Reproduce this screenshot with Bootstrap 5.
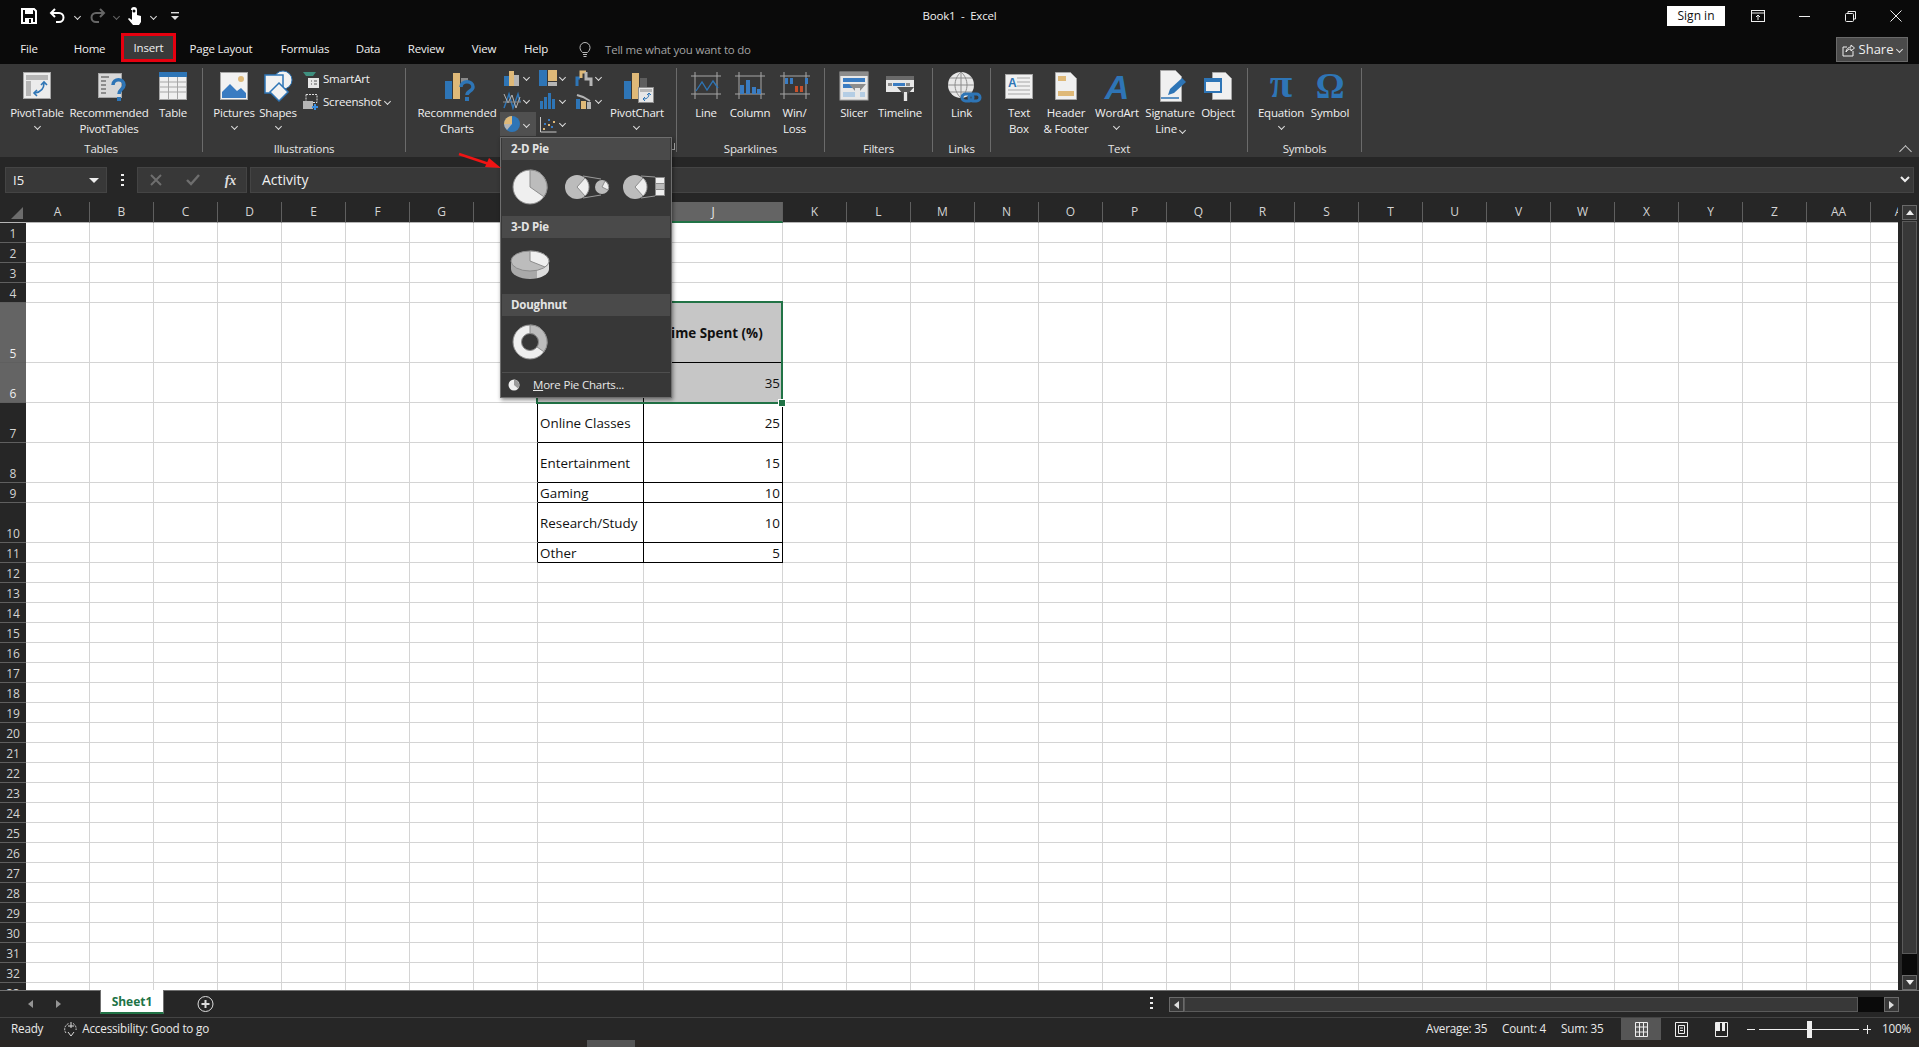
<!DOCTYPE html>
<html lang="en">
<head>
  <meta charset="UTF-8">
  <title>Book1 - Excel</title>
  <link href="https://cdn.jsdelivr.net/npm/bootstrap@5.3.3/dist/css/bootstrap.min.css" rel="stylesheet">
  <style>
    html, body { height: 100%; overflow: hidden; background: #262626; }
    body { font-family: "Open Sans", "Liberation Sans", sans-serif; font-size: 11.5px; letter-spacing: -.2px; color: #f0f0f0; }
    svg { display: block; flex: none; }
    .xl-app { width: 1919px; height: 1047px; position: relative; overflow: hidden; }

    .chv { display: inline-block; width: 5px; height: 5px; border-right: 1.4px solid #ddd; border-bottom: 1.4px solid #ddd; transform: rotate(45deg); flex: none; }
    .chv-dim { border-color: #666; }

    /* title + tabs */
    .title-bar { height: 32px; background: #0a0a0a; }
    .qat { width: 700px; padding-left: 20px; }
    .qat-gap { margin-left: 8px; }
    .qat-undo { margin-left: 11px; }
    .qat-custom { margin-left: 14px; }
    .doc-title { width: 519px; text-align: center; }
    .win-side { width: 700px; }
    .sign-in { width: 58px; height: 20px; margin-right: 10px; background: #fff; color: #111; line-height: 20px; text-align: center; border: 0; padding: 0; font-size: 12px; }
    .win-btn { width: 46px; display: flex; justify-content: center; }
    .tab-bar { height: 32px; background: #0a0a0a; position: relative; }
    .tab-item { color: #f0f0f0; text-align: center; line-height: 28px; height: 32px; padding-top: 3px; }
    .tab-file { width: 58px; }
    .tab-home { width: 63px; }
    .tab-insert { width: 55px; height: 29px; margin-top: 1px; line-height: 23px; background: #3a3a3a; border: 3px solid #e6000f; padding: 0; }
    .tab-layout { width: 90px; }
    .tab-formulas { width: 78px; }
    .tab-data { width: 48px; }
    .tab-review { width: 68px; }
    .tab-view { width: 48px; }
    .tab-help { width: 56px; }
    .tell-me { color: #a3a3a3; margin-left: 15px; gap: 14px; }
    .share-btn { position: absolute; left: 1836px; top: 5px; width: 72px; height: 25px; background: #4a4a4a; border: 1px solid #6a6a6a; color: #f0f0f0; font-size: 13px; letter-spacing: 0; padding: 0; gap: 4px; }

    /* ribbon */
    .ribbon { height: 93px; background: #383838; position: relative; }
    .rb-sep { width: 1px; height: 84px; margin-top: 4px; background: #6b6b6b; flex: none; }
    .rb-group { flex: none; padding-top: 2px; }
    .rb-row { display: grid; height: 75px; justify-items: center; align-items: start; }
    .rb-cap { line-height: 16px; text-align: center; color: #e6e6e6; }
    .rb-item { display: flex; flex-direction: column; align-items: center; white-space: nowrap; }
    .rb-icon { width: 40px; height: 39px; }
    .rb-label { line-height: 16px; text-align: center; }
    .rb-item .chv { margin-top: 3px; }
    .g-tables { width: 202px; }
    .g-tables .rb-row { grid-template-columns: 74px 70px 58px; }
    .g-illus { width: 202px; }
    .g-illus .rb-row { grid-template-columns: 62px 26px 114px; }
    .g-charts { width: 270px; position: relative; }
    .g-charts .rb-row { grid-template-columns: 86px 108px 58px; padding-left: 8px; }
    .g-spark { width: 147px; }
    .g-spark .rb-row { grid-template-columns: 58px 30px 59px; }
    .g-filter { width: 107px; }
    .g-filter .rb-row { grid-template-columns: 58px 34px 15px; }
    .g-links { width: 57px; }
    .g-links .rb-row { grid-template-columns: 57px; }
    .g-text { width: 256px; }
    .g-text .rb-row { grid-template-columns: 56px 38px 64px 42px 54px; }
    .g-sym { width: 113px; }
    .g-sym .rb-row { grid-template-columns: 66px 32px; }
    .small-list { justify-self: start; padding-left: 12px; padding-top: 1px; }
    .small-row { height: 23px; gap: 4px; white-space: nowrap; }
    .chart-grid { display: grid; grid-template-columns: repeat(3, 36px); grid-auto-rows: 23px; justify-self: start; }
    .chart-cell { display: flex; align-items: center; gap: 2px; padding-left: 2px; }
    .chart-on { background: #505050; height: 24px; }
    .launcher { position: absolute; left: 266px; top: 79px; width: 3px; height: 7px; border-right: 1px solid #aaa; border-bottom: 1px solid #aaa; }
    .rb-collapse { position: absolute; left: 1901px; top: 83px; width: 9px; height: 9px; border-left: 1.4px solid #ccc; border-top: 1.4px solid #ccc; transform: rotate(45deg); }

    /* formula bar */
    .fx-row { height: 45px; background: #262626; padding: 10px 5px 10px 5px; }
    .name-box { width: 102px; height: 26px; background: #383838; border: 1px solid #444; padding: 0 7px; line-height: 24px; font-size: 13px; letter-spacing: 0; }
    .tri-down { width: 0; height: 0; border-left: 5px solid transparent; border-right: 5px solid transparent; border-top: 5px solid #eee; }
    .fx-dots { width: 30px; }
    .fx-btns { width: 110px; height: 26px; background: #383838; border: 1px solid #444; padding: 0 10px 0 12px; }
    .fx-sym { font-family: "Liberation Serif", serif; font-style: italic; font-weight: 700; font-size: 14px; color: #ddd; }
    .fx-input { width: 1664px; height: 26px; margin-left: 3px; background: #383838; border: 1px solid #444; padding: 0 3px 0 11px; line-height: 24px; font-size: 14px; letter-spacing: 0; }

    /* sheet */
    .sheet-area { height: 788px; position: relative; }
    .grid-wrap { width: 1898px; height: 788px; overflow: hidden; background: #fff; position: relative; flex: none; }
    .xl-grid { table-layout: fixed; width: 1935px; border-collapse: separate; border-spacing: 0; font-size: 13.4px; letter-spacing: 0; color: #111; }
    .xl-grid td, .xl-grid th { padding: 0 2px; border-right: 1px solid #d4d4d4; border-bottom: 1px solid #d4d4d4; line-height: 16px; white-space: nowrap; overflow: hidden; vertical-align: middle; font-weight: 400; }
    .xl-grid th.col-head { height: 21px; background: #262626; color: #d4d4d4; text-align: center; font-size: 12px; border-right: 1px solid #5f5f5f; border-bottom: 1px solid #b5b5b5; }
    .xl-grid th.col-on { background: #646464; border-bottom: 2px solid #217346; color: #e8e8e8; }
    .xl-grid th.row-head { background: #262626; color: #d4d4d4; text-align: center; vertical-align: bottom; font-size: 12px; border-right: 0; border-bottom: 1px solid #5f5f5f; line-height: 17px; padding: 0; }
    .xl-grid th.row-on { background: #646464; color: #f0f0f0; }
    .xl-grid th.corner { background: #262626; border-bottom: 1px solid #b5b5b5; border-right: 0; position: relative; }
    .corner-tri { position: absolute; right: 3px; bottom: 3px; width: 0; height: 0; border-left: 12px solid transparent; border-bottom: 12px solid #6c6c6c; }
    .xl-grid td.sel-cell { background: #c6c6c6; }
    .xl-grid td.box-r { border-right-color: #000; }
    .xl-grid td.box-b { border-bottom-color: #000; }
    .xl-grid td.num { text-align: right; }
    .xl-grid td.head-cell { font-weight: 700; text-align: center; }
    .sel-box { position: absolute; left: 536px; top: 99px; width: 247px; height: 103px; border: 2px solid #217346; pointer-events: none; }
    .sel-handle { position: absolute; right: -5px; bottom: -5px; width: 8px; height: 8px; background: #217346; border: 1px solid #fff; }
    .v-scroll { width: 21px; padding: 3px 2px 0 4px; height: 788px; }
    .sb-btn { background: #383838; border: 1px solid #6a6a6a; flex: none; }
    .v-btn { height: 15px; }
    .v-thumb { height: 733px; margin-top: 1px; background: #383838; border: 1px solid #5a5a5a; }
    .v-track { flex: 1; background: #0a0a0a; }
    .tri-up { width: 0; height: 0; border-left: 4px solid transparent; border-right: 4px solid transparent; border-bottom: 5px solid #eee; }
    .tri-dn { width: 0; height: 0; border-left: 4px solid transparent; border-right: 4px solid transparent; border-top: 5px solid #eee; }
    .tri-l { width: 0; height: 0; border-top: 4px solid transparent; border-bottom: 4px solid transparent; border-right: 5px solid #ddd; }
    .tri-r { width: 0; height: 0; border-top: 4px solid transparent; border-bottom: 4px solid transparent; border-left: 5px solid #ddd; }
    .tri-mute { opacity: .6; }

    /* sheet tabs + status */
    .sheet-tabs { height: 28px; background: #262626; border-top: 1px solid #707070; border-bottom: 1px solid #444; position: relative; }
    .tab-nav { width: 100px; padding-left: 28px; gap: 23px; }
    .sheet-tab { width: 64px; height: 24px; margin-top: -1px; background: #fff; color: #217346; font-size: 12px; letter-spacing: 0; font-weight: 700; text-align: center; line-height: 23px; border-bottom: 2px solid #217346; border-left: 1px solid #707070; border-right: 1px solid #707070; }
    .add-sheet { margin-left: 33px; }
    .sheet-dots { position: absolute; left: 1150px; top: 5px; }
    .h-scroll { position: absolute; left: 1169px; top: 6px; width: 730px; height: 15px; }
    .h-btn { width: 15px; }
    .h-thumb { width: 674px; background: #383838; border: 1px solid #5a5a5a; }
    .h-track { flex: 1; background: #0a0a0a; }
    .status-bar { height: 22px; background: #262626; padding-left: 11px; font-size: 11.7px; color: #eaeaea; position: relative; }
    .acc-text { margin-left: 20px; gap: 3px; }
    .status-right { position: absolute; left: 1426px; top: 0; height: 22px; }
    .stat-avg { width: 76px; }
    .stat-count { width: 59px; }
    .stat-sum { width: 60px; }
    .view-btn { width: 40px; height: 22px; }
    .view-on { background: #565656; }
    .zoom-ctl { margin-left: 6px; gap: 4px; }
    .zoom-line { width: 100px; height: 1px; background: #eee; position: relative; }
    .zoom-thumb { position: absolute; left: 48px; top: -8px; width: 5px; height: 17px; background: #eee; }
    .zoom-sign { width: 8px; height: 1px; background: #eee; position: relative; }
    .zoom-plus::after { content: ""; position: absolute; left: 3.5px; top: -4px; width: 1px; height: 9px; background: #eee; }
    .zoom-pct { margin-left: 11px; }
    .desk-strip { height: 7px; background: #2b2724; position: relative; }
    .desk-thumb { position: absolute; left: 587px; top: 0; width: 48px; height: 7px; background: #555; }

    /* pie dropdown */
    .pie-menu { position: absolute; left: 500px; top: 137px; width: 172px; height: 261px; background: #373737; border: 1px solid #6e6e6e; box-shadow: 1px 2px 4px rgba(0,0,0,.45); color: #e8e8e8; z-index: 5; padding: 0 1px; }
    .pie-head { height: 22px; line-height: 22px; background: #4a4a4a; font-weight: 700; padding-left: 9px; color: #e4e4e4; }
    .pie-body { height: 56px; padding-left: 5px; padding-bottom: 2px; gap: 11px; }
    .pie-low { padding-bottom: 4px; }
    .pie-foot { height: 25px; border-top: 1px solid #4e4e4e; padding-left: 6px; gap: 13px; }
    .red-arrow { position: absolute; left: 456px; top: 150px; z-index: 6; }
  </style>
</head>
<body>

<div class="xl-app">

  <!-- title bar -->
  <div class="title-bar d-flex align-items-center">
    <div class="qat d-flex align-items-center">
      <svg width="18" height="18" viewBox="0 0 18 18"><path d="M2 2h12l2 2v12H2z" fill="none" stroke="#fff" stroke-width="2"/><rect x="5" y="2" width="8" height="5" fill="#fff"/><rect x="5" y="11" width="8" height="5" fill="#fff"/><rect x="9" y="12" width="2" height="4" fill="#0a0a0a"/></svg>
      <svg class="qat-undo" width="18" height="16" viewBox="0 0 18 16"><path d="M6 1L2 5l4 4M2 5h8a4.500 4.500 0 0 1 0 9H7" fill="none" stroke="#fff" stroke-width="2"/></svg>
      <span class="chv qat-gap"></span>
      <svg class="qat-gap" width="18" height="16" viewBox="0 0 18 16"><path d="M12 1l4 4-4 4M16 5H8a4.500 4.500 0 0 0 0 9h3" fill="none" stroke="#666" stroke-width="2"/></svg>
      <span class="chv chv-dim qat-gap"></span>
      <svg class="qat-gap" width="16" height="20" viewBox="0 0 16 20"><path d="M4 4a3 3 0 1 1 6 0v5l4 1v6l-2 3H6l-5-6 1-1 3 2V4z" fill="#fff"/><circle cx="7" cy="5" r="1.500" fill="#0a0a0a"/></svg>
      <span class="chv qat-gap"></span>
      <svg class="qat-custom" width="10" height="10" viewBox="0 0 10 10"><rect x="1" y="1" width="8" height="1.400" fill="#ddd"/><path d="M1 5h8L5 9z" fill="#ddd"/></svg>
    </div>
    <div class="doc-title">Book1&nbsp; -&nbsp; Excel</div>
    <div class="win-side d-flex align-items-center justify-content-end">
      <button class="sign-in">Sign in</button>
      <div class="win-btn"><svg width="14" height="12" viewBox="0 0 14 12"><rect x=".5" y=".5" width="13" height="11" fill="none" stroke="#eee"/><path d="M1 3h12M7 10V5M5 7l2-2 2 2" fill="none" stroke="#eee"/></svg></div>
      <div class="win-btn"><svg width="11" height="11" viewBox="0 0 11 11"><path d="M0 5.500h11" stroke="#eee"/></svg></div>
      <div class="win-btn"><svg width="11" height="11" viewBox="0 0 11 11"><rect x=".5" y="2.500" width="8" height="8" rx="1" fill="none" stroke="#eee"/><path d="M3 2.500V.5h7.500V8H8.500" fill="none" stroke="#eee"/></svg></div>
      <div class="win-btn"><svg width="12" height="12" viewBox="0 0 12 12"><path d="M.5.5l11 11M11.500.5l-11 11" stroke="#eee"/></svg></div>
    </div>
  </div>

  <!-- tabs -->
  <div class="tab-bar d-flex align-items-start">
    <div class="tab-item tab-file">File</div>
    <div class="tab-item tab-home">Home</div>
    <div class="tab-item tab-insert">Insert</div>
    <div class="tab-item tab-layout">Page Layout</div>
    <div class="tab-item tab-formulas">Formulas</div>
    <div class="tab-item tab-data">Data</div>
    <div class="tab-item tab-review">Review</div>
    <div class="tab-item tab-view">View</div>
    <div class="tab-item tab-help">Help</div>
    <div class="tell-me d-flex align-items-center tab-item">
      <svg width="12" height="17" viewBox="0 0 12 17"><path d="M3.500 11.500C2 10 1 8.500 1 6.500a5 5 0 0 1 10 0c0 2-1 3.500-2.500 5zM4 13.500h4M4.500 15.500h3" fill="none" stroke="#bbb"/></svg>
      <span>Tell me what you want to do</span>
    </div>
    <button class="share-btn d-flex align-items-center justify-content-center">
      <svg width="13" height="14" viewBox="0 0 13 14"><path d="M5 4H1v9h10V8M4 9c0-3 3-5 5-5V2l3.500 3L9 8V6C7 6 5 7 4 9z" fill="none" stroke="#eee"/></svg>
      Share <span class="chv"></span>
    </button>
  </div>

  <!-- ribbon -->
  <div class="ribbon d-flex align-items-start">

    <div class="rb-group g-tables">
      <div class="rb-row">
        <div class="rb-item">
          <svg class="rb-icon" viewBox="0 0 40 39"><rect x="6.500" y="6.500" width="27" height="26" fill="#ececec" stroke="#a6a6a6"/><rect x="9" y="9" width="22" height="5" fill="#b5b5b5"/><rect x="9" y="15" width="5" height="15" fill="#b5b5b5"/><path d="M27 17c0 6-3 9-9 10" fill="none" stroke="#2e75b6" stroke-width="1.600"/><path d="M24 19l3-3 3 3M20 24l-3 3 3 3" fill="none" stroke="#2e75b6" stroke-width="1.600"/></svg>
          <div class="rb-label">PivotTable</div><span class="chv"></span>
        </div>
        <div class="rb-item">
          <svg class="rb-icon" viewBox="0 0 40 39"><rect x="9.500" y="7.500" width="23" height="24" fill="#d8d8d8" stroke="#a6a6a6"/><path d="M12 11h8M12 15h5M12 19h5M12 23h5M12 27h5" stroke="#8c8c8c" stroke-width="2"/><path d="M24 19c0-7 11-7 11 0 0 4-5 4-5 9" fill="none" stroke="#2e75b6" stroke-width="3.500"/><rect x="28" y="31" width="4" height="4" fill="#2e75b6"/></svg>
          <div class="rb-label">Recommended<br>PivotTables</div>
        </div>
        <div class="rb-item">
          <svg class="rb-icon" viewBox="0 0 40 39"><rect x="6.500" y="6.500" width="27" height="27" fill="#f0f0f0" stroke="#a6a6a6"/><rect x="6" y="6" width="28" height="5" fill="#2e75b6"/><path d="M6 16h28M6 21h28M6 26h28M15.500 11v22M24.500 11v22" stroke="#a6a6a6"/></svg>
          <div class="rb-label">Table</div>
        </div>
      </div>
      <div class="rb-cap">Tables</div>
    </div>
    <div class="rb-sep"></div>

    <div class="rb-group g-illus">
      <div class="rb-row">
        <div class="rb-item">
          <svg class="rb-icon" viewBox="0 0 40 39"><rect x="6.500" y="6.500" width="27" height="27" fill="#f2f2f2" stroke="#a6a6a6"/><circle cx="27" cy="13" r="3" fill="#dfb978"/><path d="M8 32V26l8-8 7 7 4-3 5 5v5z" fill="#3a7cc2"/></svg>
          <div class="rb-label">Pictures</div><span class="chv"></span>
        </div>
        <div class="rb-item">
          <svg class="rb-icon" viewBox="0 0 40 39"><circle cx="25" cy="14" r="9" fill="#f2f2f2" stroke="#2e75b6"/><rect x="7" y="9" width="18" height="18" fill="#f2f2f2" stroke="#2e75b6" stroke-width="1.500"/><path d="M21 17l9 9-9 9-9-9z" fill="#f2f2f2" stroke="#2e75b6" stroke-width="1.500"/></svg>
          <div class="rb-label">Shapes</div><span class="chv"></span>
        </div>
        <div class="small-list">
          <div class="small-row d-flex align-items-center">
            <svg width="16" height="18" viewBox="0 0 16 18"><path d="M0 2h13l-3 4H3z" fill="#3f8f7f"/><rect x="5" y="8" width="11" height="10" fill="#e6e6e6"/><path d="M8 11h1M11 11h3M8 14h1M11 14h3" stroke="#555"/></svg>
            <span>SmartArt</span>
          </div>
          <div class="small-row d-flex align-items-center">
            <svg width="16" height="18" viewBox="0 0 16 18"><rect x="3" y="1.500" width="11" height="8" fill="none" stroke="#ddd" stroke-dasharray="2 1"/><rect x="0" y="8" width="10" height="8" fill="#b5b5b5"/><path d="M12 11v6M9 14h6" stroke="#3a8ee0" stroke-width="2"/></svg>
            <span>Screenshot</span> <span class="chv"></span>
          </div>
        </div>
      </div>
      <div class="rb-cap">Illustrations</div>
    </div>
    <div class="rb-sep"></div>

    <div class="rb-group g-charts">
      <div class="rb-row">
        <div class="rb-item">
          <svg class="rb-icon" viewBox="0 0 40 39"><rect x="8" y="15" width="7" height="18" fill="#2e75b6"/><rect x="16" y="7" width="7" height="26" fill="#dfb978"/><rect x="24" y="12" width="7" height="5" fill="#8a8a8a"/><path d="M24 21c0-7 12-7 12 0 0 4-6 4-6 8" fill="none" stroke="#2e75b6" stroke-width="3.500"/><rect x="28" y="31" width="4" height="4" fill="#2e75b6"/></svg>
          <div class="rb-label">Recommended<br>Charts</div>
        </div>
        <div class="chart-grid">
          <div class="chart-cell"><svg width="20" height="20" viewBox="0 0 20 20"><rect x="2" y="8" width="5" height="10" fill="#2e75b6"/><rect x="7" y="3" width="5" height="15" fill="#dfb978"/><rect x="12" y="7" width="5" height="11" fill="#b5b5b5"/></svg><span class="chv"></span></div>
          <div class="chart-cell"><svg width="20" height="20" viewBox="0 0 20 20"><rect x="1" y="2" width="8" height="16" fill="#2e75b6"/><rect x="10" y="2" width="9" height="11" fill="#dfb978"/><rect x="10" y="14" width="9" height="4" fill="#b5b5b5"/></svg><span class="chv"></span></div>
          <div class="chart-cell"><svg width="20" height="20" viewBox="0 0 20 20"><path d="M3 18V10h3" fill="none" stroke="#2e75b6" stroke-width="3"/><path d="M7 10V4h5" fill="none" stroke="#dfb978" stroke-width="3"/><path d="M12 4v7h5v7" fill="none" stroke="#b5b5b5" stroke-width="3"/></svg><span class="chv"></span></div>
          <div class="chart-cell"><svg width="20" height="20" viewBox="0 0 20 20"><path d="M2 17L7 3l4 14 5-14 2 8" fill="none" stroke="#2e75b6" stroke-width="1.500"/><path d="M2 3l4 9 4-8 4 13 4-11" fill="none" stroke="#b5b5b5"/><path d="M1 11h18" stroke="#8a8a8a"/></svg><span class="chv"></span></div>
          <div class="chart-cell"><svg width="20" height="20" viewBox="0 0 20 20"><rect x="2" y="10" width="3" height="8" fill="#2e75b6"/><rect x="6" y="6" width="3" height="12" fill="#2e75b6"/><rect x="10" y="2" width="3" height="16" fill="#2e75b6"/><rect x="14" y="8" width="3" height="10" fill="#2e75b6"/></svg><span class="chv"></span></div>
          <div class="chart-cell"><svg width="20" height="20" viewBox="0 0 20 20"><rect x="2" y="8" width="4" height="10" fill="#2e75b6"/><rect x="7" y="10" width="5" height="8" fill="#dfb978"/><rect x="13" y="11" width="4" height="7" fill="#b5b5b5"/><path d="M3 4l6 2 7 4" fill="none" stroke="#b5b5b5" stroke-width="2"/></svg><span class="chv"></span></div>
          <div class="chart-cell chart-on"><svg width="20" height="20" viewBox="0 0 20 20"><circle cx="10" cy="10" r="8" fill="#2e75b6"/><path d="M10 10V2a8 8 0 0 0-8 8z" fill="#dfb978"/><path d="M10 10H2a8 8 0 0 0 3 6z" fill="#b5b5b5"/></svg><span class="chv"></span></div>
          <div class="chart-cell"><svg width="20" height="20" viewBox="0 0 20 20"><path d="M2.500 3v15h16" fill="none" stroke="#c8c8c8"/><g fill="#3a7cc2"><rect x="10" y="5" width="2" height="2"/><rect x="6" y="9" width="2" height="2"/><rect x="13" y="12" width="2" height="2"/></g><g fill="#dfb978"><rect x="15" y="7" width="2" height="2"/><rect x="5" y="14" width="2" height="2"/><rect x="10" y="10" width="2" height="2"/></g></svg><span class="chv"></span></div>
        </div>
        <div class="rb-item">
          <svg class="rb-icon" viewBox="0 0 40 39"><rect x="7" y="15" width="7" height="18" fill="#2e75b6"/><rect x="15" y="7" width="7" height="26" fill="#dfb978"/><rect x="23" y="12" width="7" height="10" fill="#5e5e5e"/><rect x="21.500" y="21.500" width="15" height="15" fill="#e6e6e6" stroke="#8c8c8c"/><rect x="23" y="23" width="12" height="3" fill="#b5b5b5"/><path d="M32 28c0 3-2 5-5 5M30 29l2-2 2 2M28 31l-2 2 2 2" fill="none" stroke="#2e75b6"/></svg>
          <div class="rb-label">PivotChart</div><span class="chv"></span>
        </div>
      </div>
      <div class="rb-cap">Charts</div>
      <span class="launcher"></span>
    </div>
    <div class="rb-sep"></div>

    <div class="rb-group g-spark">
      <div class="rb-row">
        <div class="rb-item">
          <svg class="rb-icon" viewBox="0 0 40 39"><path d="M5 10h30M5 28h30M9 6v27M31 6v27" stroke="#a6a6a6"/><path d="M10 25l6-9 5 8 6-9 5 7" fill="none" stroke="#2e75b6" stroke-width="1.300"/></svg>
          <div class="rb-label">Line</div>
        </div>
        <div class="rb-item">
          <svg class="rb-icon" viewBox="0 0 40 39"><path d="M5 10h30M5 28h30M9 6v27M31 6v27" stroke="#a6a6a6"/><rect x="10" y="19" width="4" height="9" fill="#3a7cc2"/><rect x="16" y="14" width="4" height="14" fill="#3a7cc2"/><rect x="22" y="21" width="4" height="7" fill="#3a7cc2"/><rect x="27" y="23" width="4" height="5" fill="#3a7cc2"/></svg>
          <div class="rb-label">Column</div>
        </div>
        <div class="rb-item">
          <svg class="rb-icon" viewBox="0 0 40 39"><path d="M5 10h30M5 28h30M9 6v27M31 6v27" stroke="#a6a6a6"/><rect x="10" y="12" width="3" height="6" fill="#3a7cc2"/><rect x="15" y="12" width="3" height="6" fill="#3a7cc2"/><rect x="20" y="20" width="3" height="6" fill="#c8502a"/><rect x="25" y="20" width="3" height="6" fill="#c8502a"/><rect x="30" y="12" width="3" height="6" fill="#3a7cc2"/></svg>
          <div class="rb-label">Win/<br>Loss</div>
        </div>
      </div>
      <div class="rb-cap">Sparklines</div>
    </div>
    <div class="rb-sep"></div>

    <div class="rb-group g-filter">
      <div class="rb-row">
        <div class="rb-item">
          <svg class="rb-icon" viewBox="0 0 40 39"><rect x="6" y="6" width="28" height="28" fill="#e8e8e8" stroke="#a6a6a6"/><rect x="6" y="6" width="28" height="4" fill="#8c8c8c"/><rect x="9" y="12" width="22" height="4" fill="#3a7cc2"/><rect x="9" y="18" width="14" height="4" fill="#3a7cc2"/><rect x="9" y="26" width="22" height="5" fill="#b4cde4"/><path d="M15 18h17l-6 7v8h-5v-8z" fill="#8c8c8c"/><path d="M21 22h5v11h-5z" fill="#e8e8e8"/></svg>
          <div class="rb-label">Slicer</div>
        </div>
        <div class="rb-item">
          <svg class="rb-icon" viewBox="0 0 40 39"><rect x="6" y="10" width="28" height="16" fill="#e8e8e8"/><rect x="6" y="10" width="28" height="4" fill="#6a6a6a"/><rect x="8" y="17" width="4" height="3" fill="#8c8c8c"/><rect x="13" y="17" width="12" height="3" fill="#3a7cc2"/><rect x="26" y="17" width="4" height="3" fill="#8c8c8c"/><path d="M17 21h17l-6 7v7h-5v-7z" fill="#555"/><path d="M24 26h3v9h-3z" fill="#e8e8e8"/></svg>
          <div class="rb-label">Timeline</div>
        </div>
      </div>
      <div class="rb-cap">Filters</div>
    </div>
    <div class="rb-sep"></div>

    <div class="rb-group g-links">
      <div class="rb-row">
        <div class="rb-item">
          <svg class="rb-icon" viewBox="0 0 40 39"><circle cx="19" cy="19" r="13" fill="#e8e8e8"/><path d="M6 19h26M8 12h22M8 26h22M19 6v26M19 6c-8 7-8 19 0 26M19 6c8 7 8 19 0 26" fill="none" stroke="#8c8c8c"/><g fill="none" stroke="#2e75b6" stroke-width="3"><rect x="20" y="28" width="11" height="7" rx="3.500"/><rect x="27" y="28" width="11" height="7" rx="3.500"/></g></svg>
          <div class="rb-label">Link</div>
        </div>
      </div>
      <div class="rb-cap">Links</div>
    </div>
    <div class="rb-sep"></div>

    <div class="rb-group g-text">
      <div class="rb-row">
        <div class="rb-item">
          <svg class="rb-icon" viewBox="0 0 40 39"><rect x="6.500" y="8.500" width="27" height="24" fill="#f0f0f0" stroke="#a6a6a6"/><text x="9" y="21" font-family="Liberation Sans, sans-serif" font-size="12" font-weight="700" fill="#2e75b6">A</text><path d="M18 12h13M18 16h13M18 20h13M9 24h22M9 28h22" stroke="#a6a6a6"/></svg>
          <div class="rb-label">Text<br>Box</div>
        </div>
        <div class="rb-item">
          <svg class="rb-icon" viewBox="0 0 40 39"><path d="M9.500 6.500h15l6 6v21h-21z" fill="#f0f0f0" stroke="#a6a6a6"/><rect x="12" y="10" width="8" height="5" fill="#dfb978"/><rect x="12" y="25" width="16" height="5" fill="#dfb978"/></svg>
          <div class="rb-label">Header<br>&amp; Footer</div>
        </div>
        <div class="rb-item">
          <svg class="rb-icon" viewBox="0 0 40 39"><text x="20" y="33" text-anchor="middle" font-family="Liberation Sans, sans-serif" font-size="34" font-style="italic" font-weight="700" fill="#2e75b6">A</text></svg>
          <div class="rb-label">WordArt</div><span class="chv"></span>
        </div>
        <div class="rb-item">
          <svg class="rb-icon" viewBox="0 0 40 39"><path d="M10.500 4.500h15l6 6v25h-21z" fill="#f0f0f0" stroke="#a6a6a6"/><path d="M18 29l2-6 12-11 4 4-12 11z" fill="#2e75b6"/><path d="M11 32h18" stroke="#2e75b6" stroke-width="1.500"/></svg>
          <div class="rb-label">Signature<br>Line <span class="chv"></span></div>
        </div>
        <div class="rb-item">
          <svg class="rb-icon" viewBox="0 0 40 39"><path d="M14.500 6.500h13l6 6v21h-19z" fill="#f0f0f0" stroke="#a6a6a6"/><rect x="7" y="13" width="16" height="13" fill="#f0f0f0" stroke="#2e75b6" stroke-width="2"/><rect x="7" y="13" width="16" height="3" fill="#2e75b6"/></svg>
          <div class="rb-label">Object</div>
        </div>
      </div>
      <div class="rb-cap">Text</div>
    </div>
    <div class="rb-sep"></div>

    <div class="rb-group g-sym">
      <div class="rb-row">
        <div class="rb-item">
          <svg class="rb-icon" viewBox="0 0 40 39"><text x="20" y="31" text-anchor="middle" font-family="Liberation Serif, serif" font-size="41" font-weight="700" fill="#2e75b6">π</text></svg>
          <div class="rb-label">Equation</div><span class="chv"></span>
        </div>
        <div class="rb-item">
          <svg class="rb-icon" viewBox="0 0 40 39"><text x="20" y="32" text-anchor="middle" font-family="Liberation Serif, serif" font-size="36" font-weight="700" fill="#2e75b6">Ω</text></svg>
          <div class="rb-label">Symbol</div>
        </div>
      </div>
      <div class="rb-cap">Symbols</div>
    </div>
    <div class="rb-sep"></div>
    <span class="rb-collapse"></span>
  </div>

  <!-- formula bar -->
  <div class="fx-row d-flex">
    <div class="name-box d-flex align-items-center justify-content-between"><span>I5</span><span class="tri-down"></span></div>
    <div class="fx-dots d-flex align-items-center justify-content-center"><svg width="3" height="12" viewBox="0 0 3 12"><path d="M0 0h3v2H0zM0 5h3v2H0zM0 10h3v2H0z" fill="#eee"/></svg></div>
    <div class="fx-btns d-flex align-items-center justify-content-between">
      <svg width="12" height="12" viewBox="0 0 12 12"><path d="M1 1l10 10M11 1L1 11" stroke="#6e6e6e" stroke-width="2"/></svg>
      <svg width="14" height="12" viewBox="0 0 14 12"><path d="M1 6l4 4 8-9" fill="none" stroke="#6e6e6e" stroke-width="2.400"/></svg>
      <span class="fx-sym">fx</span>
    </div>
    <div class="fx-input d-flex align-items-center justify-content-between"><span>Activity</span><svg width="10" height="8" viewBox="0 0 10 8"><path d="M1 1l4 4 4-4" fill="none" stroke="#eee" stroke-width="2"/></svg></div>
  </div>

  <!-- sheet -->
  <div class="sheet-area d-flex">
    <div class="grid-wrap">
      <table class="xl-grid" id="sheetGrid"><colgroup id="gridCols"></colgroup><thead></thead><tbody></tbody></table>
      <div class="sel-box"><span class="sel-handle"></span></div>
    </div>
    <div class="v-scroll d-flex flex-column">
      <div class="sb-btn v-btn d-flex align-items-center justify-content-center"><span class="tri-up"></span></div>
      <div class="v-thumb"></div>
      <div class="v-track"></div>
      <div class="sb-btn v-btn d-flex align-items-center justify-content-center"><span class="tri-dn"></span></div>
    </div>
  </div>

  <!-- sheet tabs -->
  <div class="sheet-tabs d-flex align-items-start">
    <div class="tab-nav d-flex align-items-center h-100"><span class="tri-l tri-mute"></span><span class="tri-r tri-mute"></span></div>
    <div class="sheet-tab">Sheet1</div>
    <svg class="add-sheet" width="17" height="26" viewBox="0 0 17 26"><circle cx="8.500" cy="13" r="7.500" fill="none" stroke="#ddd"/><path d="M8.500 9v8M4.500 13h8" stroke="#ddd" stroke-width="2"/></svg>
    <svg class="sheet-dots" width="3" height="14" viewBox="0 0 3 14"><path d="M0 1h3v2H0zM0 6h3v2H0zM0 11h3v2H0z" fill="#eee"/></svg>
    <div class="h-scroll d-flex">
      <div class="sb-btn h-btn d-flex align-items-center justify-content-center"><span class="tri-l"></span></div>
      <div class="h-thumb"></div>
      <div class="h-track"></div>
      <div class="sb-btn h-btn d-flex align-items-center justify-content-center"><span class="tri-r"></span></div>
    </div>
  </div>

  <!-- status bar -->
  <div class="status-bar d-flex align-items-center">
    <span>Ready</span>
    <div class="acc-text d-flex align-items-center">
      <svg width="16" height="16" viewBox="0 0 16 16"><path d="M3 12A6 6 0 0 1 6 2.500M10 2.500A6 6 0 0 1 13 9" fill="none" stroke="#ddd" stroke-dasharray="2 1"/><path d="M8 1v6M5 5h6M5 11l3 4 3-4" fill="none" stroke="#ddd"/></svg>
      <span>Accessibility: Good to go</span>
    </div>
    <div class="status-right d-flex align-items-center">
      <span class="stat-avg">Average: 35</span>
      <span class="stat-count">Count: 4</span>
      <span class="stat-sum">Sum: 35</span>
      <div class="view-btn view-on d-flex align-items-center justify-content-center"><svg width="13" height="15" viewBox="0 0 13 15"><path d="M.5.5h12v14H.5zM4.500.5v14M8.500.5v14M.5 5h12M.5 10h12" fill="none" stroke="#eee"/></svg></div>
      <div class="view-btn d-flex align-items-center justify-content-center"><svg width="13" height="15" viewBox="0 0 13 15"><path d="M.5.5h12v14H.5z" fill="none" stroke="#eee"/><path d="M3.500 3.500h6v8h-6zM5 6h3M5 8.500h3" fill="none" stroke="#eee"/></svg></div>
      <div class="view-btn d-flex align-items-center justify-content-center"><svg width="13" height="15" viewBox="0 0 13 15"><path d="M.5.5h12v14H.5z" fill="none" stroke="#eee"/><path d="M1 1h4v8H1zM7 1h3v8H7z" fill="#eee"/></svg></div>
      <div class="zoom-ctl d-flex align-items-center">
        <span class="zoom-sign"></span>
        <div class="zoom-line"><span class="zoom-thumb"></span></div>
        <span class="zoom-sign zoom-plus"></span>
      </div>
      <span class="zoom-pct">100%</span>
    </div>
  </div>
  <div class="desk-strip"><span class="desk-thumb"></span></div>

  <!-- pie chart dropdown -->
  <div class="pie-menu">
    <div class="pie-head">2-D Pie</div>
    <div class="pie-body d-flex align-items-center">
      <svg width="46" height="46" viewBox="0 0 46 46"><circle cx="23" cy="23" r="17" fill="#efefef" stroke="#8c8c8c"/><path d="M23 23V6a17 17 0 0 1 13.900 26.750z" fill="#bcbcbc" stroke="#8c8c8c"/></svg>
      <svg width="46" height="46" viewBox="0 0 46 46"><path d="M19 12l18 3M19 34l18-3" stroke="#9a9a9a"/><circle cx="13" cy="23" r="12" fill="#bcbcbc"/><path d="M13 23l8-9a12 12 0 0 1 0 18z" fill="#efefef" stroke="#8c8c8c"/><circle cx="38" cy="23" r="7" fill="#bcbcbc"/><path d="M38 23l3-6a7 7 0 0 1 3 9z" fill="#efefef" stroke="#8c8c8c"/></svg>
      <svg width="46" height="46" viewBox="0 0 46 46"><path d="M20 12l14 1M20 34l14-2" stroke="#9a9a9a"/><circle cx="14" cy="23" r="12" fill="#bcbcbc"/><path d="M14 23l8-9a12 12 0 0 1 0 18z" fill="#efefef" stroke="#8c8c8c"/><rect x="34.500" y="13.500" width="9" height="6" fill="#efefef" stroke="#8c8c8c"/><rect x="34.500" y="19.500" width="9" height="6" fill="#bcbcbc" stroke="#8c8c8c"/><rect x="34.500" y="25.500" width="9" height="6" fill="#efefef" stroke="#8c8c8c"/></svg>
    </div>
    <div class="pie-head">3-D Pie</div>
    <div class="pie-body d-flex align-items-center">
      <svg width="46" height="46" viewBox="0 0 46 46"><path d="M4 19v8a19 10 0 0 0 38 0v-8z" fill="#a9a9a9"/><path d="M30 36a19 10 0 0 0 12-9v-8H30z" fill="#dcdcdc"/><ellipse cx="23" cy="19" rx="19" ry="10" fill="#bcbcbc" stroke="#8c8c8c"/><path d="M23 19V9a19 10 0 0 1 15 16z" fill="#efefef" stroke="#8c8c8c"/></svg>
    </div>
    <div class="pie-head">Doughnut</div>
    <div class="pie-body pie-low d-flex align-items-center">
      <svg width="46" height="46" viewBox="0 0 46 46"><circle cx="23" cy="23" r="17" fill="#efefef" stroke="#8c8c8c"/><path d="M23 6a17 17 0 0 1 13.900 26.750l-7-4.900A8.500 8.500 0 0 0 23 14.500z" fill="#bcbcbc" stroke="#8c8c8c"/><circle cx="23" cy="23" r="8.500" fill="#373737" stroke="#8c8c8c"/></svg>
    </div>
    <div class="pie-foot d-flex align-items-center">
      <svg width="12" height="12" viewBox="0 0 12 12"><circle cx="6" cy="6" r="5.500" fill="#efefef"/><path d="M6 6V.5a5.500 5.500 0 0 1 4 9z" fill="#9a9a9a"/></svg>
      <span><u>M</u>ore Pie Charts...</span>
    </div>
  </div>

  <svg class="red-arrow" width="48" height="22" viewBox="0 0 48 22"><path d="M3 4l30 10" stroke="#f01414" stroke-width="2.400"/><path d="M45 18l-16-1 4-9z" fill="#f01414"/></svg>

</div>

<script src="https://cdn.jsdelivr.net/npm/bootstrap@5.3.3/dist/js/bootstrap.bundle.min.js"></script>
<script>
const columns = ["A","B","C","D","E","F","G","H","I","J","K","L","M","N","O","P","Q","R","S","T","U","V","W","X","Y","Z","AA","AB"];
const wideColumns = {I: 106, J: 139};
const tallRows = {5: 60, 6: 40, 7: 40, 8: 40, 10: 40};
const tableData = {
  5: ["Activity", "Time Spent (%)"],
  6: ["Social Media", 35],
  7: ["Online Classes", 25],
  8: ["Entertainment", 15],
  9: ["Gaming", 10],
  10: ["Research/Study", 10],
  11: ["Other", 5]
};

function renderGrid() {
  const colgroup = document.getElementById("gridCols");
  colgroup.innerHTML = `<col width="26">` + columns.map(c => `<col width="${wideColumns[c] || 64}">`).join("");

  const head = document.querySelector("#sheetGrid thead");
  head.innerHTML = `<tr><th class="corner"><span class="corner-tri"></span></th>` +
    columns.map(c => `<th class="col-head ${c === "I" || c === "J" ? "col-on" : ""}">${c}</th>`).join("") + `</tr>`;

  const body = document.querySelector("#sheetGrid tbody");
  let html = "";
  for (let r = 1; r <= 33; r++) {
    const h = tallRows[r] || 20;
    const data = tableData[r];
    html += `<tr style="height:${h}px"><th class="row-head ${r === 5 || r === 6 ? "row-on" : ""}">${r}</th>`;
    columns.forEach(c => {
      let cls = [];
      let text = "";
      if (data && c === "I") { text = data[0]; cls.push("box-r", "box-b"); }
      if (data && c === "J") { text = data[1]; cls.push("box-r", "box-b"); if (r > 5) cls.push("num"); }
      if (data && c === "H") cls.push("box-r");
      if (r === 4 && (c === "I" || c === "J")) cls.push("box-b");
      if ((r === 5 || r === 6) && (c === "I" || c === "J")) cls.push("sel-cell");
      if (r === 5 && (c === "I" || c === "J")) cls.push("head-cell");
      html += `<td class="${cls.join(" ")}">${text}</td>`;
    });
    html += `</tr>`;
  }
  body.innerHTML = html;
}

renderGrid();
</script>
</body>
</html>
